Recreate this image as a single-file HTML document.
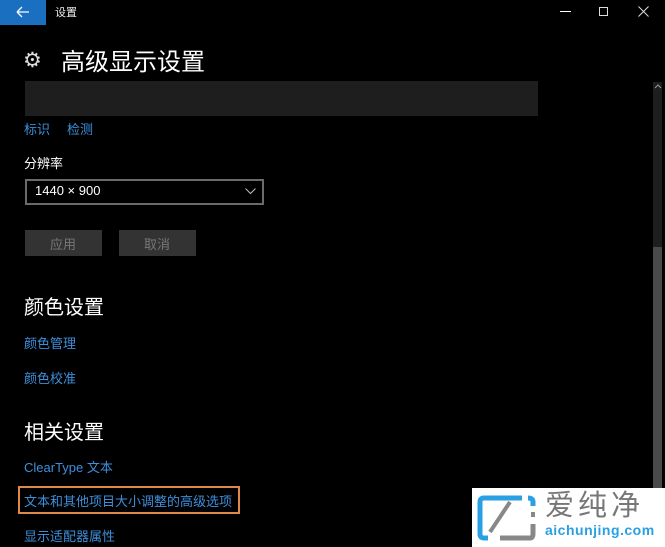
<!DOCTYPE html>
<html><head><meta charset="utf-8"><style>
*{margin:0;padding:0;box-sizing:border-box}
body{width:665px;height:547px;background:#000;overflow:hidden;position:relative;font-family:"Liberation Sans","Noto Sans CJK SC",sans-serif;color:#fff}
.a{position:absolute;white-space:nowrap}
.link{color:#3d8fdc;font-size:13px}
</style></head><body>
<div class="a" style="left:0;top:0;width:46px;height:25px;background:#1a6fc1"></div>
<svg class="a" style="left:16px;top:6px" width="14" height="12" viewBox="0 0 14 12"><path d="M1 6H13M1 6L6 1M1 6L6 11" stroke="#fff" stroke-width="1.3" fill="none"/></svg>
<div class="a" style="left:55px;top:4px;font-size:11px;color:#eee">设置</div>
<div class="a" style="left:560px;top:11px;width:11px;height:1px;background:#fff"></div>
<div class="a" style="left:599px;top:7px;width:9px;height:9px;border:1px solid #ddd"></div>
<svg class="a" style="left:638px;top:6px" width="11" height="11"><path d="M0.5 0.5L10.5 10.5M10.5 0.5L0.5 10.5" stroke="#ddd" stroke-width="1"/></svg>
<div class="a" style="left:23px;top:49px;font-size:21px;color:#ddd;line-height:24px">⚙</div>
<div class="a" style="left:61px;top:42px;font-size:24px;color:#fff">高级显示设置</div>
<div class="a" style="left:25px;top:81px;width:513px;height:35px;background:#1e1e1e"></div>
<div class="a link" style="left:24px;top:119px">标识</div>
<div class="a link" style="left:67px;top:119px">检测</div>
<div class="a" style="left:24px;top:153px;font-size:13px;color:#fff">分辨率</div>
<div class="a" style="left:25px;top:179px;width:239px;height:26px;border:2px solid #6a6a6a"></div>
<div class="a" style="left:35px;top:183px;font-size:13px;color:#fff">1440 × 900</div>
<svg class="a" style="left:245px;top:188px" width="11" height="7"><path d="M0.5 0.5L5.5 5.5L10.5 0.5" stroke="#bbb" fill="none"/></svg>
<div class="a" style="left:25px;top:230px;width:77px;height:26px;background:#333"></div>
<div class="a" style="left:50px;top:234px;font-size:13px;color:#777">应用</div>
<div class="a" style="left:119px;top:230px;width:77px;height:26px;background:#333"></div>
<div class="a" style="left:144px;top:234px;font-size:13px;color:#777">取消</div>
<div class="a" style="left:24px;top:291px;font-size:20px;color:#fff">颜色设置</div>
<div class="a link" style="left:24px;top:333px">颜色管理</div>
<div class="a link" style="left:24px;top:368px">颜色校准</div>
<div class="a" style="left:24px;top:416px;font-size:20px;color:#fff">相关设置</div>
<div class="a link" style="left:24px;top:457px">ClearType 文本</div>
<div class="a" style="left:18px;top:486px;width:222px;height:28px;border:2px solid #e08a4a"></div>
<div class="a link" style="left:24px;top:491px">文本和其他项目大小调整的高级选项</div>
<div class="a link" style="left:24px;top:526px">显示适配器属性</div>
<div class="a" style="left:653px;top:82px;width:9px;height:406px;background:#1e1e1e"></div>
<svg class="a" style="left:654px;top:84px" width="8" height="5"><path d="M1 4L4 1L7 4" stroke="#999" fill="none"/></svg>
<div class="a" style="left:653px;top:247px;width:9px;height:241px;background:#4a4a4a"></div>
<div class="a" style="left:472px;top:488px;width:193px;height:59px;background:#fff"></div>
<svg class="a" style="left:476px;top:494px" width="62" height="48" viewBox="0 0 62 48"><path d="M46 4H8Q4 4 4 8V40Q4 44 8 44H12" stroke="#2aa0e4" stroke-width="5" fill="none"/><path d="M52 4Q57 4 57 8V12" stroke="#2aa0e4" stroke-width="5" fill="none"/><path d="M14 38L34 8" stroke="#888" stroke-width="4"/><path d="M24 44H54Q57 44 57 40V30" stroke="#888" stroke-width="5" fill="none"/><rect x="55" y="18" width="4" height="5" fill="#888"/></svg>
<div class="a" style="left:545px;top:489px;font-size:29px;color:#777;letter-spacing:4px;line-height:34px">爱纯净</div>
<div class="a" style="left:545px;top:522px;font-size:14px;font-weight:bold;color:#2aa0e4;letter-spacing:0.5px">aichunjing.com</div>
</body></html>
